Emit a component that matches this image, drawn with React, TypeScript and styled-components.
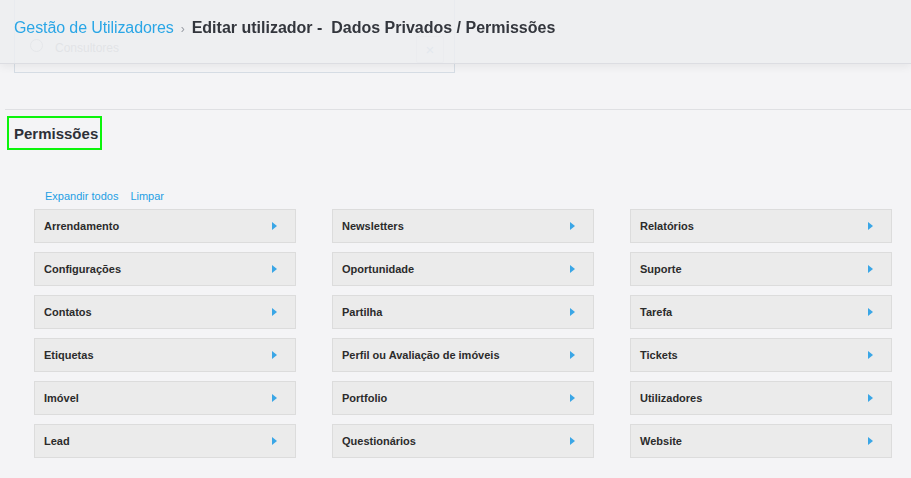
import React from "react";
import styled, { createGlobalStyle } from "styled-components";

const Global = createGlobalStyle`
  html, body { margin: 0; padding: 0; background: #f4f4f6; }
  body { font-family: "Liberation Sans", Arial, sans-serif; color: #333; }
`;

const Header = styled.header`
  position: fixed;
  top: 0;
  left: 0;
  right: 0;
  height: 64px;
  background: rgba(236, 237, 240, 0.86);
  border-bottom: 1px solid #dcdde2;
  box-shadow: 0 3px 8px rgba(0, 0, 0, 0.06);
  display: flex;
  align-items: center;
  padding: 0 14px 8px;
  box-sizing: border-box;
  z-index: 10;
  font-size: 16px;
`;

const Crumb = styled.a`
  color: #2aa6e6;
  text-decoration: none;
  letter-spacing: -0.1px;
`;

const Sep = styled.span`
  color: #9a9ea6;
  font-size: 12px;
  margin: 3px 7px 0 7px;
`;

const Title = styled.h1`
  margin: 0;
  font-size: 16px;
  font-weight: bold;
  color: #33363d;
  white-space: pre;
`;

const Page = styled.div`
  display: flex;
  flex-direction: column;
`;

const Card = styled.div`
  margin-left: 14px;
  width: 441px;
  height: 73px;
  border: 1px solid #d6dde5;
  border-top: none;
  box-sizing: border-box;
  display: flex;
  align-items: flex-end;
  padding: 0 10px 9px 15px;
`;

const OptionRow = styled.div`
  display: flex;
  align-items: center;
  width: 100%;
  height: 27px;
`;

const Radio = styled.span`
  width: 11px;
  height: 11px;
  border: 1px solid #b5b9bf;
  border-radius: 50%;
  margin-right: 12px;
  margin-top: -8px;
`;

const OptionLabel = styled.span`
  color: #9ea3aa;
  font-size: 12px;
  flex: 1;
  margin-top: -4px;
`;

const CloseBtn = styled.span`
  width: 28px;
  height: 27px;
  border: 1px solid #dfe2e6;
  border-radius: 2px;
  display: flex;
  align-items: center;
  justify-content: center;
  color: #a9c2da;
  font-size: 15px;
  box-sizing: border-box;
`;

const Divider = styled.hr`
  margin: 36px 0 0 5px;
  border: none;
  border-top: 1px solid #dfe0e3;
  height: 0;
`;

const SectionTitle = styled.h2`
  margin: 6px 0 0 7px;
  align-self: flex-start;
  width: 95px;
  height: 34px;
  box-sizing: border-box;
  border: 2px solid #0bf40b;
  padding: 0 0 0 5px;
  display: flex;
  align-items: center;
  font-size: 15px;
  font-weight: bold;
  color: #2e3038;
`;

const Links = styled.div`
  display: flex;
  gap: 12px;
  margin: 39px 0 0 45px;
  font-size: 11px;
  line-height: 14px;
`;

const LinkBtn = styled.a`
  color: #1f9fe4;
  text-decoration: none;
  cursor: pointer;
`;

const Grid = styled.div`
  margin: 6px 0 0 34px;
  width: 859px;
  display: grid;
  grid-template-columns: repeat(3, 262px);
  grid-auto-flow: column;
  grid-template-rows: repeat(6, 34px);
  column-gap: 36px;
  row-gap: 9px;
`;

const Item = styled.div`
  background: #ebebeb;
  border: 1px solid #dcdcdc;
  box-sizing: border-box;
  display: flex;
  align-items: center;
  justify-content: space-between;
  padding: 0 18px 0 9px;
  font-size: 11px;
  font-weight: bold;
  color: #2b2b2b;
`;

const Arrow = styled.span`
  width: 0;
  height: 0;
  border-top: 4px solid transparent;
  border-bottom: 4px solid transparent;
  border-left: 5px solid #3aa6e6;
`;

const items = [
  "Arrendamento",
  "Configurações",
  "Contatos",
  "Etiquetas",
  "Imóvel",
  "Lead",
  "Newsletters",
  "Oportunidade",
  "Partilha",
  "Perfil ou Avaliação de imóveis",
  "Portfolio",
  "Questionários",
  "Relatórios",
  "Suporte",
  "Tarefa",
  "Tickets",
  "Utilizadores",
  "Website",
];

export default function App() {
  return (
    <>
      <Global />
      <Header>
        <Crumb>Gestão de Utilizadores</Crumb>
        <Sep>›</Sep>
        <Title>Editar utilizador -  Dados Privados / Permissões</Title>
      </Header>
      <Page>
        <Card>
          <OptionRow>
            <Radio />
            <OptionLabel>Consultores</OptionLabel>
            <CloseBtn>×</CloseBtn>
          </OptionRow>
        </Card>
        <Divider />
        <SectionTitle>Permissões</SectionTitle>
        <Links>
          <LinkBtn>Expandir todos</LinkBtn>
          <LinkBtn>Limpar</LinkBtn>
        </Links>
        <Grid>
          {items.map((t) => (
            <Item key={t}>
              <span>{t}</span>
              <Arrow />
            </Item>
          ))}
        </Grid>
      </Page>
    </>
  );
}
